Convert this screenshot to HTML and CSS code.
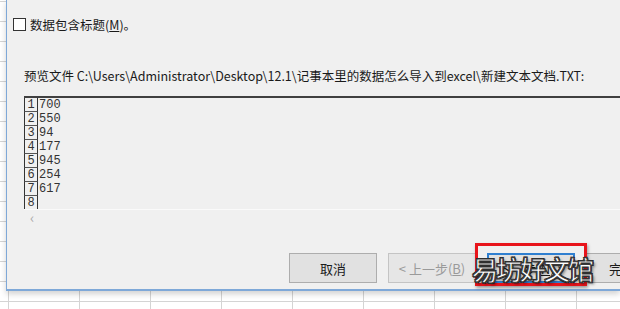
FILE: index.html
```html
<!DOCTYPE html>
<html lang="zh-CN">
  <head>
    <meta charset="UTF-8" />
    <title>文本导入向导</title>
    <link rel="stylesheet" href="styles.css">
  </head>
  <body>
    <div class="dialog">
      <label class="check-row">
        <span class="checkbox"></span>
        <span>数据包含标题(<u>M</u>)。</span>
      </label>

      <p class="preview-label">预览文件 C:\Users\Administrator\Desktop\12.1\记事本里的数据怎么导入到excel\新建文本文档.TXT:</p>

      <div class="preview">
        <div class="rows">
          <div class="row"><span class="num">1</span><span class="val">700</span></div>
          <div class="row"><span class="num">2</span><span class="val">550</span></div>
          <div class="row"><span class="num">3</span><span class="val">94</span></div>
          <div class="row"><span class="num">4</span><span class="val">177</span></div>
          <div class="row"><span class="num">5</span><span class="val">945</span></div>
          <div class="row"><span class="num">6</span><span class="val">254</span></div>
          <div class="row"><span class="num">7</span><span class="val">617</span></div>
          <div class="row"><span class="num">8</span><span class="val"></span></div>
        </div>
        <div class="hscroll">&lsaquo;</div>
      </div>

      <div class="buttons">
        <button class="btn">取消</button>
        <button class="btn disabled">&lt; 上一步(<u>B</u>)</button>
        <button class="btn primary">下一步(<u>N</u>) &gt;</button>
        <button class="btn">完成(<u>F</u>)</button>
      </div>
    </div>

    <div class="highlight"></div>
    <div class="watermark">易坊好文馆</div>
  </body>
</html>
```

FILE: styles.css
```css
body {
  margin: 0;
  width: 620px;
  height: 309px;
  overflow: hidden;
  position: relative;
  font-family: "Noto Sans CJK SC", "Noto Sans", sans-serif;
  background-color: #ffffff;
  background-image:
    repeating-linear-gradient(to right, transparent 0 7px, #d4d4d4 7px 8px, transparent 8px 71px),
    repeating-linear-gradient(to bottom, transparent 0 1px, #d4d4d4 1px 2px, transparent 2px 20px);
  background-position: 1px 0, 0 0;
}

.dialog {
  margin-left: 6px;
  height: 289px;
  background: #f0f0f0;
  border-left: 1px solid #7ea8d8;
  border-bottom: 2px solid #7ea8d8;
  box-shadow: 0 3px 6px rgba(0, 0, 0, 0.18);
  display: flex;
  flex-direction: column;
  color: #1a1a1a;
  font-size: 12.5px;
}

.check-row {
  display: flex;
  align-items: center;
  gap: 4px;
  margin: 16px 0 0 6px;
  height: 17px;
}

.checkbox {
  width: 11px;
  height: 11px;
  border: 1px solid #333;
  background: #fff;
}

.preview-label {
  margin: 34px 0 0 17px;
  line-height: 17px;
  white-space: nowrap;
}

.preview {
  margin: 12px 0 0 17px;
  border-top: 2px solid #404040;
  height: 128px;
  display: flex;
  flex-direction: column;
}

.rows {
  height: 111px;
  overflow: hidden;
  border-bottom: 1px solid #fafafa;
}

.row {
  display: flex;
  height: 14px;
  font-family: "Liberation Mono", monospace;
  font-size: 12px;
  line-height: 15px;
  color: #333;
}

.num {
  width: 14px;
  border-left: 1px solid #333;
  border-right: 1px solid #333;
  border-bottom: 1px solid #555;
  text-align: center;
  box-sizing: border-box;
}

.val {
  padding-left: 1px;
}

.hscroll {
  color: #a8a8a8;
  font-size: 14px;
  line-height: 14px;
  padding-left: 6px;
}

.buttons {
  display: flex;
  gap: 11px;
  margin: 27px 0 0 282px;
}

.btn {
  flex: none;
  width: 88px;
  height: 30px;
  background: #e1e1e1;
  border: 1px solid #adadad;
  font-family: inherit;
  font-size: 13px;
  color: #1a1a1a;
  padding: 0;
}

.btn.disabled {
  color: #9a9a9a;
  border-color: #c4c4c4;
  background: #e6e6e6;
}

.btn.primary {
  border: 2px solid #2f7fd0;
}

.highlight {
  position: absolute;
  left: 475px;
  top: 243px;
  width: 106px;
  height: 37px;
  border: 3px solid #e8141b;
  box-shadow: 1px 2px 3px rgba(0, 0, 0, 0.35);
}

.watermark {
  position: absolute;
  left: 472px;
  top: 251px;
  font-size: 26px;
  font-weight: 500;
  line-height: 36px;
  color: #ffffff;
  letter-spacing: -2px;
  -webkit-text-stroke: 1px #3a3a3a;
  text-shadow: 1px 1px 0 #222, -1px -1px 0 #222, 1px -1px 0 #222, -1px 1px 0 #222, 2px 2px 3px rgba(0, 0, 0, 0.5);
}
```
